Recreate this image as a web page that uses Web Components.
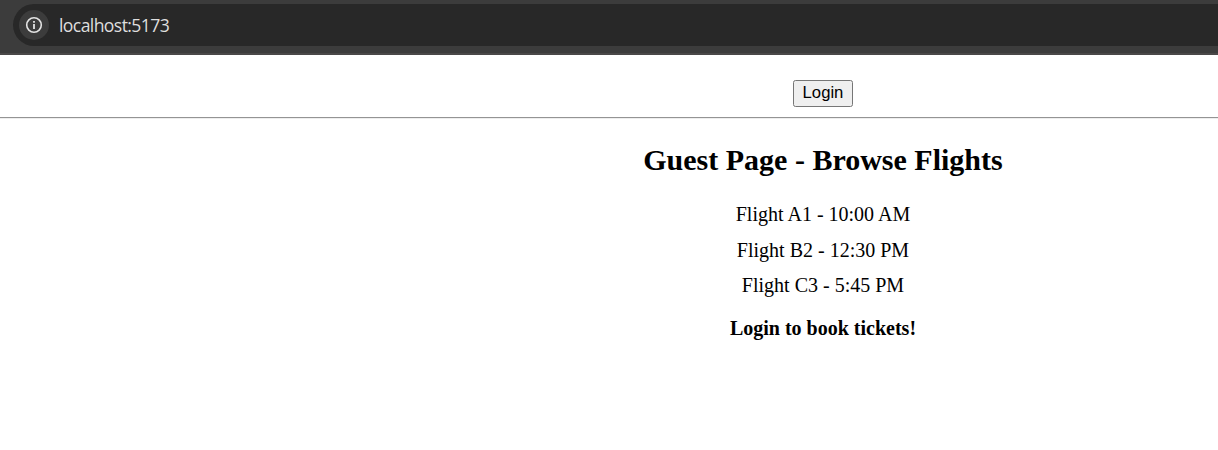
<!DOCTYPE html>
<html lang="en">
<head>
<meta charset="utf-8">
<title>Flights</title>
<style>
html, body { margin: 0; height: 100%; overflow: hidden; background: #fff; color: #000; }
body { font-family: "Liberation Serif", "Times New Roman", serif; }
</style>
</head>
<body>
<address-bar>localhost:5173</address-bar>
<flight-app>
  <login-button slot="action">Login</login-button>
  <guest-page>
    <span slot="title">Guest Page - Browse Flights</span>
    <flight-item>Flight A1 - 10:00 AM</flight-item>
    <flight-item>Flight B2 - 12:30 PM</flight-item>
    <flight-item>Flight C3 - 5:45 PM</flight-item>
    <span slot="note">Login to book tickets!</span>
  </guest-page>
</flight-app>
<script>
const define = (name, html) => customElements.define(name, class extends HTMLElement {
  constructor() {
    super();
    this.attachShadow({ mode: 'open' }).innerHTML = html;
  }
});

define('address-bar', `
<style>
:host { display: block; box-sizing: border-box; height: 55px; padding: 4px 0 0 13px; background: #3c3c3c; border-bottom: 2px solid #4a4848; overflow: hidden; }
.field { box-sizing: border-box; height: 42px; display: flex; align-items: center; padding-left: 6px; border-radius: 21px 0 0 21px; background: #282828; }
.info { width: 30px; height: 30px; border-radius: 50%; background: #3c3c3c; display: grid; place-items: center; }
.url { margin-left: 10px; font: 17.6px/24px "Open Sans", sans-serif; color: #bcbcbc; letter-spacing: -0.6px; }
.url::first-line { color: #dedede; }
svg { display: block; }
</style>
<div class="field">
  <div class="info"><svg width="18" height="18" viewBox="0 0 18 18" fill="none" stroke="#e3e3e3"><circle cx="9" cy="9" r="7.3" stroke-width="1.6"/><path d="M9 8v5M9 4.9v1.9" stroke-width="1.8"/></svg></div>
  <span class="url"><slot></slot></span>
</div>`);

define('login-button', `
<style>
:host { display: block; }
button { display: block; box-sizing: border-box; width: 60px; height: 27px; margin: 0; padding: 0 0 1px; border: 1px solid #767676; border-radius: 2.5px; background: #efefef; color: #000; font: 16.67px/24px "Liberation Sans", Arial, sans-serif; text-align: center; }
</style>
<button><slot></slot></button>`);

define('flight-app', `
<style>
:host { display: block; }
nav { display: flex; justify-content: center; padding: 25px 0 10px 428px; border-bottom: 1px solid #949494; }
main { padding-left: 428px; border-top: 1px solid #eee; }
</style>
<nav><slot name="action"></slot></nav>
<main><slot></slot></main>`);

define('guest-page', `
<style>
:host { display: block; text-align: center; font-size: 20px; line-height: 23px; }
h2 { margin: 23px 0 0; font-size: 30px; line-height: 35px; }
.list { display: grid; gap: 12.5px; margin-top: 26px; }
p { margin: 20px 0 0; font-weight: bold; }
</style>
<h2><slot name="title"></slot></h2>
<div class="list"><slot></slot></div>
<p><slot name="note"></slot></p>`);

define('flight-item', `
<style>:host { display: block; }</style>
<slot></slot>`);
</script>
</body>
</html>
